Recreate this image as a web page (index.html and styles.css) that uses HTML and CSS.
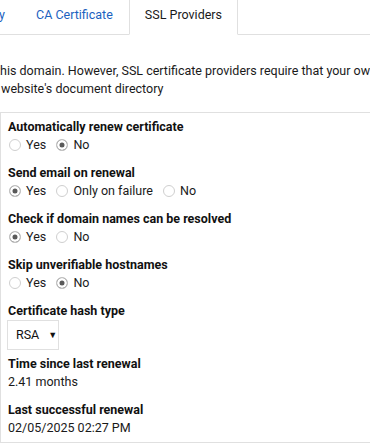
FILE: index.html
```html
<!DOCTYPE html>
<html lang="en">
<head>
    <meta charset="UTF-8">
    <meta name="viewport" content="width=device-width, initial-scale=1.0">
    <title>SSL Providers</title>
    <link rel="stylesheet" href="styles.css">
</head>
<body>
    <ul class="tabs">
        <li class="tab tab-clipped"><a href="#" class="tab-link">Let's Encrypt Policy</a></li>
        <li class="tab"><a href="#" class="tab-link">CA Certificate</a></li>
        <li class="tab active"><a href="#" class="tab-link">SSL Providers</a></li>
    </ul>

    <p class="intro">
        <span class="intro-line first">this domain. However, SSL certificate providers require that your ownership is verified</span>
        <span class="intro-line">website's document directory</span>
    </p>

    <form class="panel">
        <div class="field">
            <div class="field-label">Automatically renew certificate</div>
            <div class="options">
                <label class="option"><input type="radio" name="renew"> Yes</label>
                <label class="option"><input type="radio" name="renew" checked> No</label>
            </div>
        </div>

        <div class="field">
            <div class="field-label">Send email on renewal</div>
            <div class="options">
                <label class="option"><input type="radio" name="email" checked> Yes</label>
                <label class="option"><input type="radio" name="email"> Only on failure</label>
                <label class="option"><input type="radio" name="email"> No</label>
            </div>
        </div>

        <div class="field">
            <div class="field-label">Check if domain names can be resolved</div>
            <div class="options">
                <label class="option"><input type="radio" name="resolve" checked> Yes</label>
                <label class="option"><input type="radio" name="resolve"> No</label>
            </div>
        </div>

        <div class="field">
            <div class="field-label">Skip unverifiable hostnames</div>
            <div class="options">
                <label class="option"><input type="radio" name="skip"> Yes</label>
                <label class="option"><input type="radio" name="skip" checked> No</label>
            </div>
        </div>

        <div class="field field-select">
            <div class="field-label">Certificate hash type</div>
            <div class="select">
                <span>RSA</span>
                <span class="select-arrow">&#9660;</span>
            </div>
        </div>

        <div class="field">
            <div class="field-label">Time since last renewal</div>
            <div class="field-value">2.41 months</div>
        </div>

        <div class="field last">
            <div class="field-label">Last successful renewal</div>
            <div class="field-value">02/05/2025 02:27 PM</div>
        </div>
    </form>
</body>
</html>
```

FILE: styles.css
```css
* {
    margin: 0;
    padding: 0;
    box-sizing: border-box;
}

html, body {
    overflow: hidden;
}

body {
    font-family: Roboto, 'Liberation Sans', Arial, sans-serif;
    font-size: 12.5px;
    line-height: 18px;
    color: #1a1a1a;
    background: white;
}

/* tabs */
.tabs {
    display: flex;
    list-style: none;
    border-bottom: 1px solid #e0e0e0;
    height: 35px;
}

.tab {
    flex: none;
    margin-bottom: -1px;
}

.tab-link {
    display: block;
    height: 35px;
    padding: 6px 15px 0;
    color: #1b62c0;
    text-decoration: none;
    border: 1px solid transparent;
    border-top: none;
}

.tab-clipped {
    width: 20px;
    overflow: hidden;
    display: flex;
    justify-content: flex-end;
}

.tab-clipped .tab-link {
    flex: none;
    padding-left: 0;
    border-right: none;
    padding-right: 15px;
}

.tab.active .tab-link {
    color: #1a1a1a;
    background: white;
    border-color: #e0e0e0;
    border-bottom-color: white;
}

/* intro text */
.intro {
    margin-top: 27px;
    margin-bottom: 14px;
    white-space: nowrap;
}

.intro-line {
    display: block;
    padding-left: 1px;
}

.intro-line.first {
    text-indent: -5px;
}

/* settings panel */
.panel {
    border: 1px solid #e0e0e0;
    margin-right: -20px;
    padding: 5px 7px 5px;
}

.field {
    margin-bottom: 10px;
}

.field.field-select {
    margin-bottom: 5px;
}

.field.last {
    margin-bottom: 0;
}

.field-label {
    font-weight: bold;
    color: #111;
}

.options {
    display: flex;
    align-items: center;
    height: 18px;
}

.option {
    display: inline-flex;
    align-items: center;
    margin-right: 9px;
    white-space: pre;
}

.option input {
    appearance: none;
    -webkit-appearance: none;
    width: 12px;
    height: 12px;
    margin: 0 2px 0 1px;
    border: 1px solid #cfcfcf;
    border-radius: 50%;
    background: white;
}

.option input:checked {
    border-color: #c4c4c4;
    background: #5a5a5a;
    box-shadow: inset 0 0 0 2.5px white;
}

.select {
    display: flex;
    align-items: center;
    width: 52px;
    height: 30px;
    margin-left: -1px;
    padding-left: 8px;
    border: 1px solid #e0e0e0;
    color: #111;
}

.select-arrow {
    font-size: 9px;
    margin-left: 9px;
}
```
